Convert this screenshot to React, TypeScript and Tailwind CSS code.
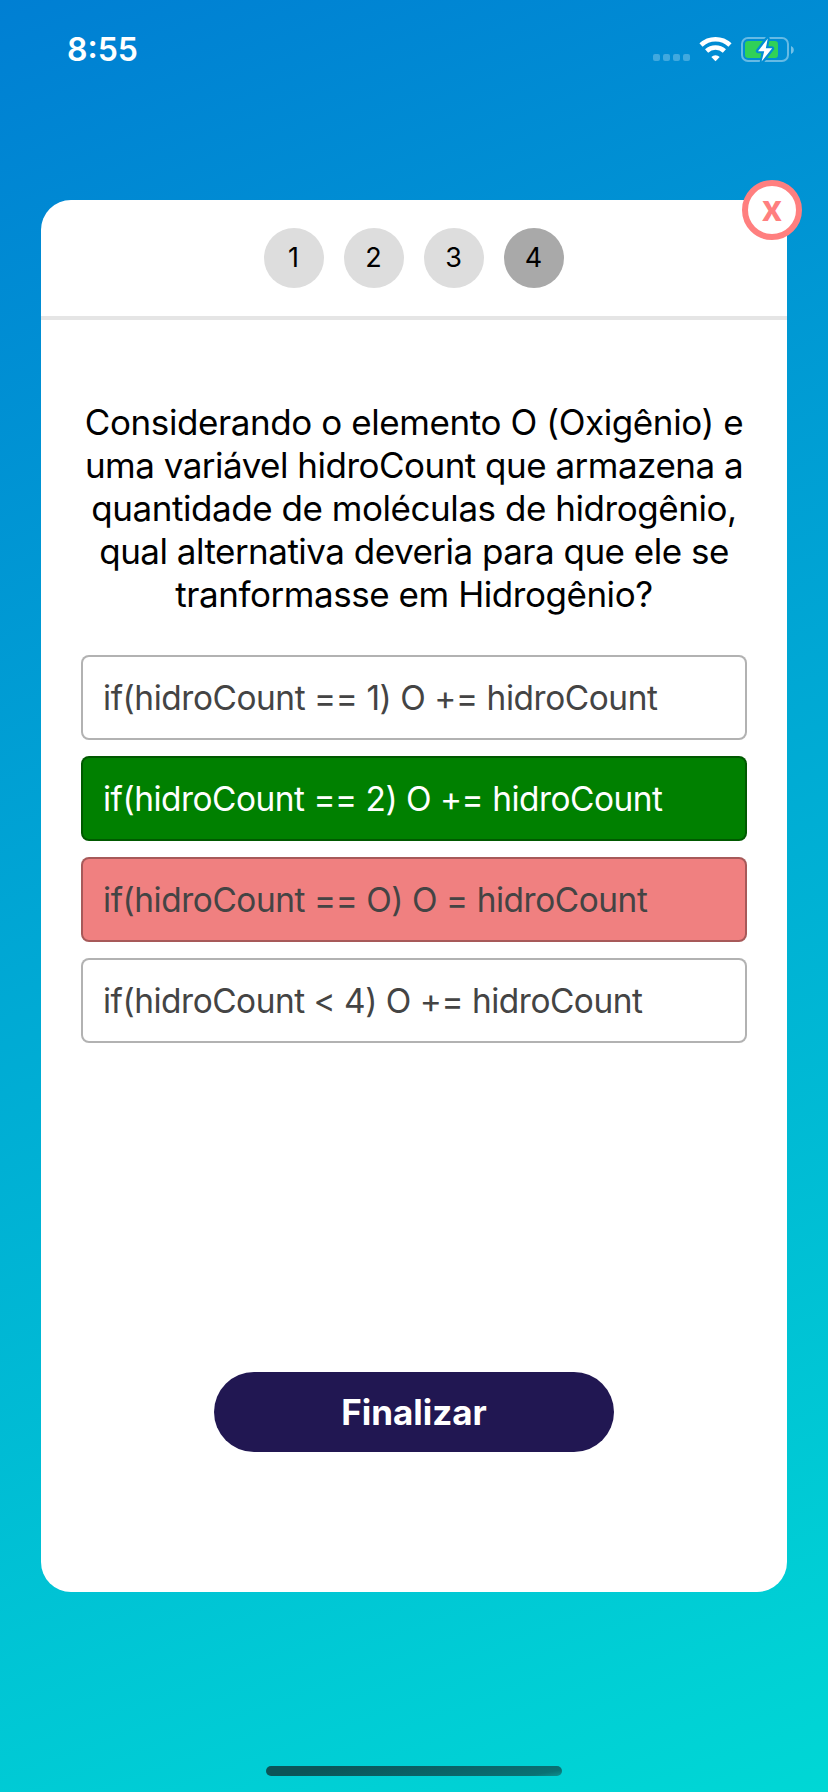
import React from "react";

const steps = [1, 2, 3, 4];

const question = [
  { text: "Considerando o elemento O (Oxigênio) e", className: "tracking-[-0.410px]" },
  { text: "uma variável hidroCount que armazena a", className: "tracking-[-0.510px]" },
  { text: "quantidade de moléculas de hidrogênio,", className: "tracking-[-0.450px]" },
  { text: "qual alternativa deveria para que ele se", className: "tracking-[-0.510px]" },
  { text: "tranformasse em Hidrogênio?", className: "tracking-[-0.450px]" },
];

const options = [
  { text: "if(hidroCount == 1) O += hidroCount", className: "bg-white text-[#444444] tracking-[-0.430px]" },
  { text: "if(hidroCount == 2) O += hidroCount", className: "bg-[#008000] text-white tracking-[-0.480px]" },
  { text: "if(hidroCount == O) O = hidroCount", className: "bg-[#f08080] text-[#444444] tracking-[-0.440px]" },
  { text: "if(hidroCount < 4) O += hidroCount", className: "bg-white text-[#444444] tracking-[-0.470px]" },
];

function StatusBar() {
  return (
    <header className="flex h-[100px] items-start justify-between pl-[67px] pr-[34px] text-white">
      <span className="pt-[30px] text-[32px] leading-[40px] font-semibold">8:55</span>
      <svg className="mt-[30px]" width="144" height="40" viewBox="650 30 144 40" fill="none">
        <g fill="#fff" fillOpacity="0.25">
          <rect x="653" y="54" width="7" height="7" rx="2" />
          <rect x="663" y="54" width="7" height="7" rx="2" />
          <rect x="673" y="54" width="7" height="7" rx="2" />
          <rect x="683" y="54" width="7" height="7" rx="2" />
        </g>
        <g stroke="#fff" strokeWidth="4.6">
          <path d="M701 45A21 21 0 0 1 730 45" />
          <path d="M706.6 51A13 13 0 0 1 724.4 51" />
        </g>
        <path d="M715.5 61.2L711.3 57A6 6 0 0 1 719.7 57Z" fill="#fff" />
        <rect x="742" y="38" width="46" height="23" rx="6" stroke="#fff" strokeOpacity="0.4" strokeWidth="2" />
        <path d="M791 46v8c1.7-.7 2.8-2.200 2.800-4s-1.100-3.300-2.800-4Z" fill="#fff" fillOpacity="0.45" />
        <rect x="745" y="41" width="33" height="17" rx="3.200" fill="#30d158" />
        <path
          d="M767.500 38.500L758 51H764L762 61.500L772 48.500H766Z"
          fill="#fff"
          stroke="#008dd3"
          strokeWidth="4.400"
          strokeLinejoin="round"
        />
        <path d="M767.800 38.500L758 51.200H764.200L761.600 61.500L772.200 48.300H765.800Z" fill="#fff" />
      </svg>
    </header>
  );
}

export default function App() {
  return (
    <div className="flex h-[1792px] w-[828px] flex-col bg-[linear-gradient(160deg,#007fd3_0%,#00d7d5_100%)] font-['Inter',sans-serif]">
      <StatusBar />
      <main className="relative mx-[41px] mt-[100px] flex h-[1392px] flex-col rounded-[30px] bg-white">
        <button className="absolute -top-[20px] -right-[15px] flex h-[60px] w-[60px] items-center justify-center rounded-full border-[6px] border-[#ff7f7f] bg-white pb-[4px] text-[36px] leading-none font-bold text-[#ff7f7f]">
          x
        </button>
        <nav className="flex h-[120px] justify-center gap-5 border-b-4 border-[#e5e5e5] pt-7">
          {steps.map((step) => (
            <span
              key={step}
              className={`flex h-[60px] w-[60px] items-center justify-center rounded-full pr-px pb-[2px] text-[27px] leading-none text-black ${
                step === 4 ? "bg-[#a9a9a9]" : "bg-[#dddddd]"
              }`}
            >
              {step}
            </span>
          ))}
        </nav>
        <h1 className="mt-[81px] flex flex-col items-center text-[35px] leading-[43px] whitespace-nowrap text-black">
          {question.map((line) => (
            <span key={line.text} className={line.className}>
              {line.text}
            </span>
          ))}
        </h1>
        <ul className="mx-10 mt-[39px] flex flex-col gap-4">
          {options.map((option) => (
            <li
              key={option.text}
              className={`flex h-[85px] items-center rounded-[8px] border-2 border-black/30 pt-[2px] pl-5 text-[33.400px] whitespace-nowrap ${option.className}`}
            >
              {option.text}
            </li>
          ))}
        </ul>
        <button className="mt-[329px] flex h-20 w-[400px] items-center justify-center self-center rounded-full bg-[#211752] text-[35px] font-bold text-white">
          Finalizar
        </button>
      </main>
      <div className="mt-[174px] h-[10px] w-[296px] self-center rounded-full bg-[linear-gradient(170deg,#0b5558_20%,#0a6468_60%,#0a7173_90%,#0d9090_100%)]" />
    </div>
  );
}
